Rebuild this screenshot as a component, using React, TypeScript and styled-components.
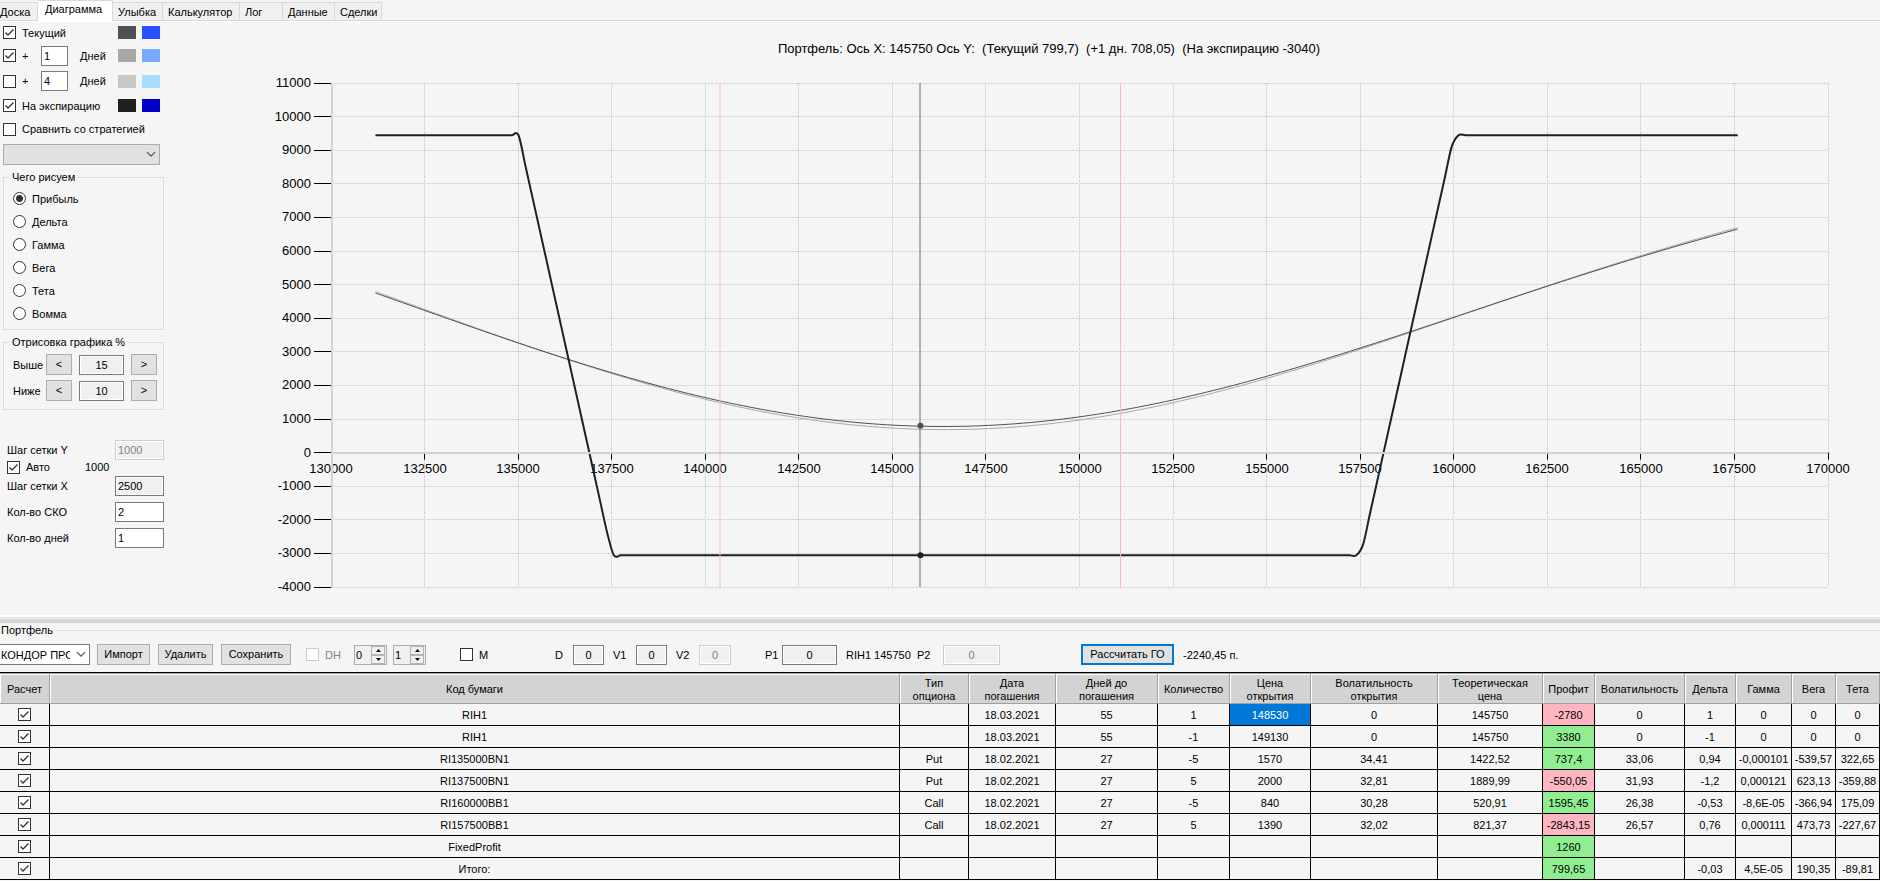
import React, { useLayoutEffect, useRef, useState } from "react";
import styled, { createGlobalStyle, css } from "styled-components";

const GlobalStyle = createGlobalStyle`
  *, *::before, *::after { box-sizing: border-box; }
  body {
    margin: 0;
    background: #f5f5f5;
    color: #000;
    font-family: "Liberation Sans", Arial, sans-serif;
    font-size: 11px;
    line-height: 14px;
  }
  input, select, button { font: inherit; color: inherit; }
`;

/* ---------- shared controls ---------- */

const Page = styled.main`
  display: flex;
  flex-direction: column;
  min-height: 100vh;
`;

const CheckBoxWrap = styled.span`
  position: relative;
  display: inline-flex;
  flex: none;
  width: 13px;
  height: 13px;
`;

const CheckInput = styled.input`
  appearance: none;
  width: 13px;
  height: 13px;
  margin: 0;
  background: #fff;
  border: 1px solid #333;
  &:disabled { border-color: #ccc; }
  &:not(:checked) + svg { display: none; }
`;

const Tick = styled.svg`
  position: absolute;
  inset: 0;
  pointer-events: none;
`;

function CheckBox(props: React.InputHTMLAttributes<HTMLInputElement>) {
  return (
    <CheckBoxWrap>
      <CheckInput type="checkbox" {...props} />
      <Tick width="13" height="13" viewBox="0 0 13 13" aria-hidden="true">
        <path d="M2.5 6.5 L5 9 L10.5 3.5" fill="none" stroke="#333" strokeWidth="1.3" />
      </Tick>
    </CheckBoxWrap>
  );
}

const Button = styled.button<{ $width: number; $primary?: boolean }>`
  flex: none;
  width: ${(p) => p.$width}px;
  height: 21px;
  padding: 0;
  line-height: 15px;
  background: #e1e1e1;
  border: ${(p) => (p.$primary ? "2px solid #0078d7" : "1px solid #adadad")};
`;

const TextBox = styled.input<{ $width: number; $center?: boolean }>`
  flex: none;
  width: ${(p) => p.$width}px;
  height: 20px;
  padding: 0 2px;
  border: 1px solid #7a7a7a;
  border-radius: 0;
  background: #fff;
  text-align: ${(p) => (p.$center ? "center" : "left")};
  &:read-only { background: #f0f0f0; box-shadow: inset 0 0 0 1px #fff; }
  &:disabled { color: #838383; border-color: #ccc; background: #f0f0f0; box-shadow: inset 0 0 0 1px #fff; }
`;

const SelectWrap = styled.span<{ $width: number }>`
  position: relative;
  display: inline-flex;
  flex: none;
  width: ${(p) => p.$width}px;
  height: 21px;
`;

const SelectBox = styled.select<{ $flushLeft?: boolean }>`
  appearance: none;
  width: 100%;
  height: 100%;
  padding: 0 19px 0 1px;
  background: #fff;
  border: 1px solid #7a7a7a;
  border-radius: 0;
  white-space: nowrap;
  overflow: hidden;
  ${(p) => p.$flushLeft && css`border-left: 0;`}
  &:disabled { background: #e1e1e1; border-color: #adadad; opacity: 1; }
`;

const Chevron = styled.svg`
  position: absolute;
  right: 4px;
  top: 7px;
  pointer-events: none;
`;

function Select({ width, options, ...rest }: { width: number; options: string[]; label: string; disabled?: boolean; flushLeft?: boolean }) {
  return (
    <SelectWrap $width={width}>
      <SelectBox aria-label={rest.label} disabled={rest.disabled} $flushLeft={rest.flushLeft}>
        {options.map((o) => (
          <option key={o}>{o}</option>
        ))}
      </SelectBox>
      <Chevron width="10" height="7" viewBox="0 0 10 7" aria-hidden="true">
        <path d="M1 1.2 L5 5.2 L9 1.2" fill="none" stroke="#505050" strokeWidth="1.2" />
      </Chevron>
    </SelectWrap>
  );
}

/* ---------- tabs ---------- */

const TabBar = styled.nav`
  display: flex;
  align-items: flex-end;
  height: 22px;
  border-bottom: 1px solid #fff;
  box-shadow: inset 0 -1px 0 #d9d9d9;
`;

const Tab = styled.button<{ $width: number; $active?: boolean; $first?: boolean }>`
  flex: none;
  width: ${(p) => p.$width}px;
  height: ${(p) => (p.$active ? 21 : 19)}px;
  padding: 0 0 ${(p) => (p.$active ? 3 : 0)}px ${(p) => (p.$first ? 0 : p.$active ? 7 : 5)}px;
  text-align: left;
  white-space: nowrap;
  border: 1px solid #d9d9d9;
  border-left: 0;
  background: #f0f0f0;
  ${(p) => p.$active && css`background: #fff; border-bottom-color: #fff;`}
`;

const TABS = [
  { name: "Доска", width: 38 },
  { name: "Диаграмма", width: 75 },
  { name: "Улыбка", width: 50 },
  { name: "Калькулятор", width: 77 },
  { name: "Лог", width: 43 },
  { name: "Данные", width: 52 },
  { name: "Сделки", width: 47 },
];

/* ---------- side panel ---------- */

const Upper = styled.section`
  display: flex;
`;

const Side = styled.aside`
  flex: none;
  width: 164px;
  padding-left: 3px;
`;

const CurveRow = styled.div<{ $height: number }>`
  display: flex;
  align-items: center;
  height: ${(p) => p.$height}px;
`;

const CheckLabel = styled.label<{ $width?: number }>`
  display: flex;
  flex: none;
  align-items: center;
  gap: 6px;
  white-space: nowrap;
  ${(p) => p.$width && css`width: ${p.$width}px;`}
`;

const DaysLabel = styled.span`
  flex: none;
  width: 50px;
  padding-left: 12px;
`;

const Swatch = styled.button<{ $color: string }>`
  flex: none;
  width: 18px;
  height: 13px;
  padding: 0;
  border: 0;
  background: ${(p) => p.$color};
  & + & { margin-left: 6px; }
`;

const StrategySelect = styled.div`
  display: flex;
  margin-top: 3px;
`;

const Group = styled.fieldset<{ $top: number; $bottom: number }>`
  margin: 5px 0 0;
  padding: ${(p) => p.$top}px 6px ${(p) => p.$bottom}px 9px;
  border: 1px solid #dcdcdc;
  min-width: 0;
`;

const Legend = styled.legend`
  margin-left: -4px;
  padding: 0 3px;
`;

const RadioLabel = styled.label`
  display: flex;
  align-items: center;
  gap: 6px;
  height: 23px;
`;

const Radio = styled.input`
  appearance: none;
  width: 13px;
  height: 13px;
  margin: 0;
  border: 1px solid #333;
  border-radius: 50%;
  background: #fff;
  &:checked { background: radial-gradient(circle, #333 0 3px, #fff 4px); }
`;

const StepRow = styled.div`
  display: flex;
  align-items: center;
  height: 21px;
  & + & { margin-top: 5px; }
  button, input { margin-right: 7px; }
`;

const StepName = styled.label`
  flex: none;
  width: 33px;
`;

const Settings = styled.div`
  margin-top: 30px;
  padding-left: 4px;
`;

const SettingRow = styled.div<{ $gap?: boolean }>`
  display: flex;
  align-items: center;
  justify-content: space-between;
  height: 20px;
  margin-top: ${(p) => (p.$gap ? 6 : 0)}px;
`;

const AutoRow = styled.div`
  display: flex;
  align-items: flex-start;
  height: 16px;
`;

const CURVES = [
  { id: "now", label: "Текущий", days: null, on: true, colors: ["#505050", "#2850ff"], height: 21 },
  { id: "plus1", label: "+", days: "1", on: true, colors: ["#a8a8a8", "#78a8ff"], height: 25 },
  { id: "plus4", label: "+", days: "4", on: false, colors: ["#c8c8c8", "#a8dcff"], height: 26 },
  { id: "expiry", label: "На экспирацию", days: null, on: true, colors: ["#202020", "#0000c8"], height: 23 },
];

const MEASURES = ["Прибыль", "Дельта", "Гамма", "Вега", "Тета", "Вомма"];

function SidePanel() {
  return (
    <Side>
      {CURVES.map((c) => (
        <CurveRow key={c.id} $height={c.height}>
          <CheckLabel $width={c.days ? 38 : 115}>
            <CheckBox defaultChecked={c.on} />
            {c.label}
          </CheckLabel>
          {c.days && (
            <>
              <TextBox $width={27} id={c.id} defaultValue={c.days} />
              <DaysLabel as="label" htmlFor={c.id}>Дней</DaysLabel>
            </>
          )}
          {c.colors.map((color) => (
            <Swatch key={color} type="button" aria-label={`Цвет ${color}`} $color={color} />
          ))}
        </CurveRow>
      ))}
      <CurveRow $height={24}>
        <CheckLabel>
          <CheckBox />
          Сравнить со стратегией
        </CheckLabel>
      </CurveRow>
      <StrategySelect>
        <Select label="Стратегия" width={157} options={[""]} disabled />
      </StrategySelect>

      <Group $top={3} $bottom={4}>
        <Legend>Чего рисуем</Legend>
        {MEASURES.map((m, i) => (
          <RadioLabel key={m}>
            <Radio type="radio" name="measure" defaultChecked={i === 0} />
            {m}
          </RadioLabel>
        ))}
      </Group>

      <Group $top={5} $bottom={8}>
        <Legend>Отрисовка графика %</Legend>
        {[["Выше", "15"], ["Ниже", "10"]].map(([name, value]) => (
          <StepRow key={name}>
            <StepName htmlFor={name}>{name}</StepName>
            <Button type="button" $width={26}>&lt;</Button>
            <TextBox id={name} $width={45} $center readOnly value={value} />
            <Button type="button" $width={26}>&gt;</Button>
          </StepRow>
        ))}
      </Group>

      <Settings>
        <SettingRow>
          <label htmlFor="stepY">Шаг сетки Y</label>
          <TextBox id="stepY" $width={49} disabled defaultValue="1000" />
        </SettingRow>
        <AutoRow>
          <CheckLabel $width={78}>
            <CheckBox defaultChecked />
            Авто
          </CheckLabel>
          <span>1000</span>
        </AutoRow>
        <SettingRow>
          <label htmlFor="stepX">Шаг сетки X</label>
          <TextBox id="stepX" $width={49} readOnly value="2500" />
        </SettingRow>
        <SettingRow $gap>
          <label htmlFor="sigma">Кол-во СКО</label>
          <TextBox id="sigma" $width={49} defaultValue="2" />
        </SettingRow>
        <SettingRow $gap>
          <label htmlFor="days">Кол-во дней</label>
          <TextBox id="days" $width={49} defaultValue="1" />
        </SettingRow>
      </Settings>
    </Side>
  );
}

/* ---------- chart ---------- */

const ChartPane = styled.div`
  flex: 1;
  min-width: 0;
`;

const ChartTitle = styled.h1`
  margin: 0;
  padding: 1px 0 0 54px;
  height: 52px;
  font-size: 13px;
  font-weight: normal;
  line-height: 52px;
  text-align: center;
  white-space: pre;
`;

const Plot = styled.svg`
  display: block;
  width: 100%;
  height: 541px;
  font-size: 13px;
`;

const SPOT = 145750;
const X_MIN = 130000;
const X_MAX = 170000;
const Y_MIN = -4000;
const Y_MAX = 11000;

function normCdf(x: number): number {
  const t = 1 / (1 + 0.2316419 * Math.abs(x));
  const poly = t * (0.31938153 + t * (-0.356563782 + t * (1.781477937 + t * (-1.821255978 + t * 1.330274429))));
  const tail = (Math.exp((-x * x) / 2) / Math.sqrt(2 * Math.PI)) * poly;
  return x >= 0 ? 1 - tail : tail;
}

const LEGS = [
  { type: "put", strike: 135000, qty: -5, open: 1570, vol: 0.3306 },
  { type: "put", strike: 137500, qty: 5, open: 2000, vol: 0.3193 },
  { type: "call", strike: 160000, qty: -5, open: 840, vol: 0.2638 },
  { type: "call", strike: 157500, qty: 5, open: 1390, vol: 0.2657 },
];

/* Futures pair (600) and fixed profit (1260) do not depend on the price. */
const CONSTANT = 1860;

function profit(price: number, days: number): number {
  return LEGS.reduce((sum, leg) => {
    let value: number;
    if (days === 0) {
      value = Math.max(0, leg.type === "put" ? leg.strike - price : price - leg.strike);
    } else {
      const sd = leg.vol * Math.sqrt(days / 365);
      const d1 = Math.log(price / leg.strike) / sd + sd / 2;
      const d2 = d1 - sd;
      value =
        leg.type === "put"
          ? leg.strike * normCdf(-d2) - price * normCdf(-d1)
          : price * normCdf(d1) - leg.strike * normCdf(d2);
    }
    return sum + leg.qty * (value - leg.open);
  }, CONSTANT);
}

type Point = [number, number];

function spline(points: Point[]): string {
  const k = 1 / 6;
  let d = `M${points[0][0]} ${points[0][1]}`;
  for (let i = 0; i < points.length - 1; i++) {
    const a = points[Math.max(0, i - 1)];
    const b = points[i];
    const c = points[i + 1];
    const e = points[Math.min(points.length - 1, i + 2)];
    d += ` C${b[0] + k * (c[0] - a[0])} ${b[1] + k * (c[1] - a[1])} ${c[0] - k * (e[0] - b[0])} ${c[1] - k * (e[1] - b[1])} ${c[0]} ${c[1]}`;
  }
  return d;
}

function range(from: number, to: number, step: number): number[] {
  const out: number[] = [];
  for (let v = from; v <= to; v += step) out.push(v);
  return out;
}

function Chart() {
  const ref = useRef<SVGSVGElement>(null);
  const [width, setWidth] = useState(1716);

  useLayoutEffect(() => {
    const el = ref.current;
    if (!el) return;
    const update = () => setWidth(el.getBoundingClientRect().width);
    update();
    const observer = new ResizeObserver(update);
    observer.observe(el);
    return () => observer.disconnect();
  }, []);

  const left = 167;
  const right = width - 52;
  const top = 9;
  const bottom = 513;
  const px = (x: number) => left + ((x - X_MIN) / (X_MAX - X_MIN)) * (right - left);
  const py = (y: number) => bottom - ((y - Y_MIN) / (Y_MAX - Y_MIN)) * (bottom - top);
  const snap = (v: number) => Math.floor(v) + 0.5;

  const xs = range(X_MIN, X_MAX, 2500);
  const ys = range(Y_MIN, Y_MAX, 1000);
  const step = Math.floor((SPOT * 0.25) / 200);
  const curve = (days: number) =>
    spline(Array.from({ length: 201 }, (_, i): Point => {
      const x = SPOT * 0.9 + i * step;
      return [px(x) + 0.5, py(profit(x, days)) + 0.5];
    }));

  return (
    <ChartPane>
      <ChartTitle>{"Портфель: Ось X: 145750 Ось Y:  (Текущий 799,7)  (+1 дн. 708,05)  (На экспирацию -3040)"}</ChartTitle>
      <Plot ref={ref} role="img" aria-label="Прибыль портфеля">
        <g stroke="#d3d3d3" strokeDasharray="3 1">
          {xs.slice(1).map((x) => (
            <line key={x} x1={snap(px(x))} x2={snap(px(x))} y1={top} y2={bottom} />
          ))}
          {ys.filter((y) => y !== 0).map((y) => (
            <line key={y} x1={left} x2={right} y1={snap(py(y))} y2={snap(py(y))} />
          ))}
        </g>
        <g stroke="#000">
          {ys.map((y) => (
            <line key={y} x1={left - 17} x2={left} y1={snap(py(y))} y2={snap(py(y))} />
          ))}
          {xs.map((x) => (
            <line key={x} x1={snap(px(x))} x2={snap(px(x))} y1={py(0)} y2={py(0) + 7} />
          ))}
        </g>
        <g textAnchor="end">
          {ys.map((y) => (
            <text key={y} x={left - 20} y={Math.round(py(y)) + 4}>{y}</text>
          ))}
        </g>
        <g textAnchor="middle">
          {xs.map((x) => (
            <text key={x} x={Math.round(px(x))} y={Math.round(py(0)) + 20}>{x}</text>
          ))}
        </g>
        <line x1={left + 1} x2={left + 1} y1={top} y2={bottom} stroke="#d3d3d3" strokeWidth="2" />
        <g fill="none">
          <path d={curve(26.65)} stroke="#a8a8a8" />
          <path d={curve(27.65)} stroke="#505050" />
          <path d={curve(0)} stroke="#202020" strokeWidth="2" />
        </g>
        <line x1={left} x2={right} y1={Math.round(py(0))} y2={Math.round(py(0))} stroke="#d3d3d3" strokeWidth="2" />
        <g stroke="#ffb6c1">
          <line x1={Math.round(px(140407))} x2={Math.round(px(140407))} y1={top} y2={bottom} strokeWidth="2" opacity="0.5" />
          <line x1={snap(px(151100))} x2={snap(px(151100))} y1={top} y2={bottom} />
        </g>
        <line x1={Math.round(px(SPOT))} x2={Math.round(px(SPOT))} y1={top} y2={bottom} stroke="#708090" strokeWidth="2" opacity="0.55" />
        <circle cx={px(SPOT)} cy={py(799.7)} r="3" fill="#505050" />
        <circle cx={px(SPOT)} cy={py(-3040) + 0.5} r="3" fill="#202020" />
      </Plot>
    </ChartPane>
  );
}

/* ---------- portfolio ---------- */

const Splitter = styled.div`
  height: 8px;
  border-top: 2px solid #fff;
  border-bottom: 4px solid #d3d3d3;
  box-shadow: inset 0 1px 0 #d9d9d9;
`;

const Portfolio = styled.fieldset`
  margin: 0;
  padding: 0;
  border: 0;
  border-top: 1px solid #dcdcdc;
  min-width: 0;
`;

const PortfolioLegend = styled.legend`
  padding: 0 3px 0 1px;
`;

const ToolBar = styled.div`
  display: flex;
  align-items: center;
  height: 35px;
  white-space: nowrap;
`;

const Cluster = styled.div<{ $left: number; $gap?: number }>`
  display: flex;
  align-items: center;
  gap: ${(p) => p.$gap ?? 0}px;
  margin-left: ${(p) => p.$left}px;
`;

const FieldName = styled.label<{ $width: number }>`
  width: ${(p) => p.$width}px;
`;

const DimLabel = styled(CheckLabel)`
  color: #838383;
`;

const Spinner = styled.span`
  display: flex;
  width: 33px;
  height: 20px;
  padding: 0 1px 0 0;
  border: 1px solid #adadad;
  background: #f0f0f0;
`;

const SpinInput = styled.input`
  width: 16px;
  padding: 0 0 0 1px;
  border: 0;
  background: transparent;
`;

const SpinButtons = styled.span`
  display: flex;
  flex-direction: column;
  width: 14px;
`;

const SpinButton = styled.button`
  display: flex;
  align-items: center;
  justify-content: center;
  height: 9px;
  padding: 0;
  border: 1px solid #b4b4b4;
  background: #f0f0f0;
`;

function NumberSpin({ label, value }: { label: string; value: string }) {
  return (
    <Spinner>
      <SpinInput aria-label={label} defaultValue={value} />
      <SpinButtons>
        <SpinButton type="button" aria-label="Больше">
          <svg width="5" height="3" viewBox="0 0 5 3"><path d="M0 3 L2.5 0 L5 3 Z" /></svg>
        </SpinButton>
        <SpinButton type="button" aria-label="Меньше">
          <svg width="5" height="3" viewBox="0 0 5 3"><path d="M0 0 L2.5 3 L5 0 Z" /></svg>
        </SpinButton>
      </SpinButtons>
    </Spinner>
  );
}

const Grid = styled.table`
  width: 100%;
  table-layout: fixed;
  border-collapse: separate;
  border-spacing: 0;
  border-top: 1px solid #000;
  text-align: center;
`;

const HeadCell = styled.th`
  height: 31px;
  padding: 2px 0 0;
  font-weight: normal;
  line-height: 13px;
  background: #d3d3d3;
  border-top: 1px solid #a0a0a0;
  border-right: 1px solid #a0a0a0;
  border-bottom: 1px solid #a0a0a0;
  box-shadow: inset 1px 1px 0 #fff;
`;

const tones = {
  loss: css`background: #ffb6c1;`,
  gain: css`background: #90ee90;`,
  selected: css`background: #0078d7; color: #fff;`,
};

const Cell = styled.td<{ $tone?: keyof typeof tones }>`
  height: 22px;
  padding: 0;
  white-space: nowrap;
  border-right: 1px solid #000;
  border-bottom: 1px solid #000;
  ${(p) => p.$tone && tones[p.$tone]}
`;

const CheckCell = styled(Cell)`
  line-height: 0;
`;

const COLUMNS: { lines: string[]; width?: number }[] = [
  { lines: ["Расчет"], width: 50 },
  { lines: ["Код бумаги"] },
  { lines: ["Тип", "опциона"], width: 69 },
  { lines: ["Дата", "погашения"], width: 87 },
  { lines: ["Дней до", "погашения"], width: 102 },
  { lines: ["Количество"], width: 72 },
  { lines: ["Цена", "открытия"], width: 81 },
  { lines: ["Волатильность", "открытия"], width: 127 },
  { lines: ["Теоретическая", "цена"], width: 105 },
  { lines: ["Профит"], width: 52 },
  { lines: ["Волатильность"], width: 90 },
  { lines: ["Дельта"], width: 51 },
  { lines: ["Гамма"], width: 56 },
  { lines: ["Вега"], width: 44 },
  { lines: ["Тета"], width: 44 },
];

const PROFIT_COLUMN = 8;
const OPEN_COLUMN = 5;

const ROWS = [
  ["RIH1", "", "18.03.2021", "55", "1", "148530", "0", "145750", "-2780", "0", "1", "0", "0", "0"],
  ["RIH1", "", "18.03.2021", "55", "-1", "149130", "0", "145750", "3380", "0", "-1", "0", "0", "0"],
  ["RI135000BN1", "Put", "18.02.2021", "27", "-5", "1570", "34,41", "1422,52", "737,4", "33,06", "0,94", "-0,000101", "-539,57", "322,65"],
  ["RI137500BN1", "Put", "18.02.2021", "27", "5", "2000", "32,81", "1889,99", "-550,05", "31,93", "-1,2", "0,000121", "623,13", "-359,88"],
  ["RI160000BB1", "Call", "18.02.2021", "27", "-5", "840", "30,28", "520,91", "1595,45", "26,38", "-0,53", "-8,6E-05", "-366,94", "175,09"],
  ["RI157500BB1", "Call", "18.02.2021", "27", "5", "1390", "32,02", "821,37", "-2843,15", "26,57", "0,76", "0,000111", "473,73", "-227,67"],
  ["FixedProfit", "", "", "", "", "", "", "", "1260", "", "", "", "", ""],
  ["Итого:", "", "", "", "", "", "", "", "799,65", "", "-0,03", "4,5E-05", "190,35", "-89,81"],
];

function toneOf(row: number, column: number, value: string): keyof typeof tones | undefined {
  if (column === PROFIT_COLUMN) return value.startsWith("-") ? "loss" : "gain";
  if (row === 0 && column === OPEN_COLUMN) return "selected";
  return undefined;
}

function PortfolioPanel() {
  return (
    <Portfolio>
      <PortfolioLegend>Портфель</PortfolioLegend>
      <ToolBar>
        <Select label="Портфель" width={90} options={["КОНДОР ПРОДАЖА"]} flushLeft />
        <Cluster $left={7} $gap={8}>
          <Button type="button" $width={53}>Импорт</Button>
          <Button type="button" $width={55}>Удалить</Button>
          <Button type="button" $width={70}>Сохранить</Button>
        </Cluster>
        <Cluster $left={15}>
          <DimLabel $width={48}>
            <CheckBox disabled />
            DH
          </DimLabel>
        </Cluster>
        <Cluster $left={0} $gap={6}>
          <NumberSpin label="DH от" value="0" />
          <NumberSpin label="DH до" value="1" />
        </Cluster>
        <Cluster $left={34}>
          <CheckLabel $width={95}>
            <CheckBox />
            M
          </CheckLabel>
        </Cluster>
        <Cluster $left={0}>
          <FieldName htmlFor="d" $width={18}>D</FieldName>
          <TextBox id="d" $width={31} $center readOnly value="0" />
        </Cluster>
        <Cluster $left={9}>
          <FieldName htmlFor="v1" $width={23}>V1</FieldName>
          <TextBox id="v1" $width={31} $center readOnly value="0" />
        </Cluster>
        <Cluster $left={9}>
          <FieldName htmlFor="v2" $width={23}>V2</FieldName>
          <TextBox id="v2" $width={32} $center disabled value="0" />
        </Cluster>
        <Cluster $left={34}>
          <FieldName htmlFor="p1" $width={17}>P1</FieldName>
          <TextBox id="p1" $width={55} $center readOnly value="0" />
        </Cluster>
        <Cluster $left={9}>
          <FieldName as="span" $width={71}>RIH1 145750</FieldName>
          <FieldName htmlFor="p2" $width={26}>P2</FieldName>
          <TextBox id="p2" $width={57} $center disabled value="0" />
        </Cluster>
        <Cluster $left={81} $gap={9}>
          <Button type="button" $width={93} $primary>Рассчитать ГО</Button>
          <span>-2240,45 п.</span>
        </Cluster>
      </ToolBar>
      <Grid>
        <colgroup>
          {COLUMNS.map((c, i) => (
            <col key={i} width={c.width} />
          ))}
        </colgroup>
        <thead>
          <tr>
            {COLUMNS.map((c, i) => (
              <HeadCell key={i} scope="col">
                {c.lines.map((line) => (
                  <div key={line}>{line}</div>
                ))}
              </HeadCell>
            ))}
          </tr>
        </thead>
        <tbody>
          {ROWS.map((row, r) => (
            <tr key={r}>
              <CheckCell>
                <CheckBox defaultChecked aria-label={row[0]} />
              </CheckCell>
              {row.map((value, c) => (
                <Cell key={c} $tone={toneOf(r, c, value)}>{value}</Cell>
              ))}
            </tr>
          ))}
        </tbody>
      </Grid>
    </Portfolio>
  );
}

export default function App() {
  return (
    <Page>
      <GlobalStyle />
      <TabBar>
        {TABS.map((t, i) => (
          <Tab key={t.name} type="button" $width={t.width} $active={i === 1} $first={i === 0}>
            {t.name}
          </Tab>
        ))}
      </TabBar>
      <Upper>
        <SidePanel />
        <Chart />
      </Upper>
      <Splitter />
      <PortfolioPanel />
    </Page>
  );
}
